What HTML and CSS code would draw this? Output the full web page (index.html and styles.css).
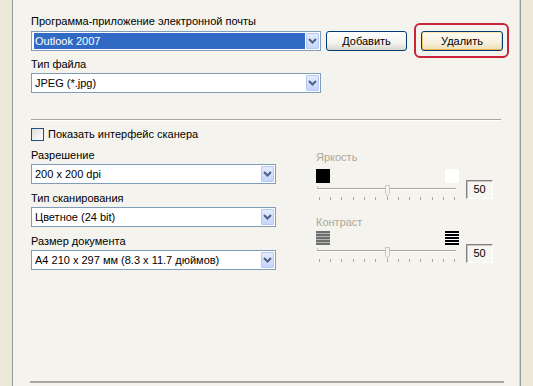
FILE: index.html
```html
<!DOCTYPE html>
<html lang="ru">
<head>
<meta charset="utf-8">
<title>Сканирование в e-mail</title>
<link rel="stylesheet" href="styles.css">
</head>
<body>
<div class="window">
  <div class="edge edge-left"></div>
  <div class="panel">
    <div class="label label-first">Программа-приложение электронной почты</div>
    <div class="mail-row">
      <div class="combo combo-wide">
        <span class="value selected">Outlook 2007</span>
        <span class="drop"><svg width="9" height="6" viewBox="0 0 9 6"><path d="M1 1 L4.5 4.5 L8 1" fill="none" stroke="#4d6185" stroke-width="2"/></svg></span>
      </div>
      <button class="btn btn-add">Добавить</button>
      <span class="btn-wrap">
        <button class="btn btn-default">Удалить</button>
        <span class="callout"></span>
      </span>
    </div>
    <div class="label label-gap">Тип файла</div>
    <div class="combo combo-wide">
      <span class="value">JPEG (*.jpg)</span>
      <span class="drop"><svg width="9" height="6" viewBox="0 0 9 6"><path d="M1 1 L4.5 4.5 L8 1" fill="none" stroke="#4d6185" stroke-width="2"/></svg></span>
    </div>

    <div class="etched"></div>

    <label class="check">
      <span class="check-box"></span>
      <span>Показать интерфейс сканера</span>
    </label>

    <div class="scan">
      <div class="scan-left">
        <div class="label">Разрешение</div>
        <div class="combo combo-mid">
          <span class="value">200 x 200 dpi</span>
          <span class="drop"><svg width="9" height="6" viewBox="0 0 9 6"><path d="M1 1 L4.5 4.5 L8 1" fill="none" stroke="#4d6185" stroke-width="2"/></svg></span>
        </div>
        <div class="label label-gap">Тип сканирования</div>
        <div class="combo combo-mid">
          <span class="value">Цветное (24 bit)</span>
          <span class="drop"><svg width="9" height="6" viewBox="0 0 9 6"><path d="M1 1 L4.5 4.5 L8 1" fill="none" stroke="#4d6185" stroke-width="2"/></svg></span>
        </div>
        <div class="label label-gap">Размер документа</div>
        <div class="combo combo-mid">
          <span class="value">A4 210 x 297 мм (8.3 x 11.7 дюймов)</span>
          <span class="drop"><svg width="9" height="6" viewBox="0 0 9 6"><path d="M1 1 L4.5 4.5 L8 1" fill="none" stroke="#4d6185" stroke-width="2"/></svg></span>
        </div>
      </div>

      <div class="scan-right">
        <div class="adjust adjust-bright">
          <div class="label disabled">Яркость</div>
          <div class="adjust-row">
            <div class="slider-col">
              <div class="icons">
                <span class="sw sw-black"></span>
                <span class="sw sw-white"></span>
              </div>
              <svg class="track" width="145" height="20" viewBox="0 0 145 20">
                <path d="M1.5 3 V7" stroke="#c9c7bd" stroke-width="1"/>
                <path d="M1 5.5 H140" stroke="#a9a79d" stroke-width="1"/>
                <path d="M1 6.5 H140" stroke="#ffffff" stroke-width="1"/>
                <path d="M69.5 2.5 H73.5 V10.5 L71.5 13.5 L69.5 10.5 Z" fill="#f4f3ee" stroke="#c9c7bd" stroke-width="1"/>
                <g stroke="#a9a79d" stroke-width="1">
                  <path d="M3.5 14 V17"/><path d="M14.5 14 V17"/><path d="M25.5 14 V17"/><path d="M37.5 14 V17"/>
                  <path d="M48.5 14 V17"/><path d="M59.5 14 V17"/><path d="M71.5 14 V17"/><path d="M82.5 14 V17"/>
                  <path d="M93.5 14 V17"/><path d="M104.5 14 V17"/><path d="M116.5 14 V17"/><path d="M127.5 14 V17"/>
                  <path d="M138.5 14 V17"/>
                </g>
              </svg>
            </div>
            <div class="num">50</div>
          </div>
        </div>

        <div class="adjust adjust-contrast">
          <div class="label disabled">Контраст</div>
          <div class="adjust-row">
            <div class="slider-col">
              <div class="icons">
                <span class="sw sw-stripes-gray"></span>
                <span class="sw sw-stripes-black"></span>
              </div>
              <svg class="track" width="145" height="20" viewBox="0 0 145 20">
                <path d="M1.5 3 V7" stroke="#c9c7bd" stroke-width="1"/>
                <path d="M1 5.5 H140" stroke="#a9a79d" stroke-width="1"/>
                <path d="M1 6.5 H140" stroke="#ffffff" stroke-width="1"/>
                <path d="M69.5 2.5 H73.5 V10.5 L71.5 13.5 L69.5 10.5 Z" fill="#f4f3ee" stroke="#c9c7bd" stroke-width="1"/>
                <g stroke="#a9a79d" stroke-width="1">
                  <path d="M3.5 14 V17"/><path d="M14.5 14 V17"/><path d="M25.5 14 V17"/><path d="M37.5 14 V17"/>
                  <path d="M48.5 14 V17"/><path d="M59.5 14 V17"/><path d="M71.5 14 V17"/><path d="M82.5 14 V17"/>
                  <path d="M93.5 14 V17"/><path d="M104.5 14 V17"/><path d="M116.5 14 V17"/><path d="M127.5 14 V17"/>
                  <path d="M138.5 14 V17"/>
                </g>
              </svg>
            </div>
            <div class="num">50</div>
          </div>
        </div>
      </div>
    </div>

    <div class="bottom-line"></div>
  </div>
  <div class="edge edge-right"></div>
</div>
</body>
</html>
```

FILE: styles.css
```css
* {
  box-sizing: border-box;
}

html, body {
  margin: 0;
  padding: 0;
  background: #ece9d8;
}

body {
  font-family: "Liberation Sans", Arial, sans-serif;
  font-size: 11px;
  color: #000;
}

.window {
  display: flex;
  width: 533px;
  height: 386px;
  overflow: hidden;
}

.edge {
  background: #ece9d8;
}

.edge-left {
  width: 12px;
  flex: none;
}

.edge-right {
  flex: 1;
}

.panel {
  width: 509px;
  flex: none;
  background: #f4f3ee;
  border-left: 1px solid #919b9c;
  border-right: 1px solid #919b9c;
  box-shadow: inset -1px 0 0 #d8d6cc;
  padding: 15px 0 3px 18px;
  display: flex;
  flex-direction: column;
}

.label {
  height: 13px;
  line-height: 13px;
  margin-bottom: 2px;
  white-space: nowrap;
}

.label-first {
  margin-bottom: 3px;
}

.label-gap {
  margin-top: 7px;
}

.scan-left .label-gap {
  margin-top: 8px;
}

.disabled {
  color: #aca899;
}

.mail-row {
  display: flex;
  align-items: center;
}

.combo {
  height: 20px;
  border: 1px solid #7f9db9;
  background: #fff;
  display: flex;
  align-items: stretch;
  flex: none;
}

.combo-wide {
  width: 290px;
}

.combo-mid {
  width: 245px;
}

.value {
  flex: 1;
  margin: 1px 1px 1px 2px;
  padding-left: 1px;
  line-height: 16px;
  white-space: nowrap;
  overflow: hidden;
}

.selected {
  background: #316ac5;
  color: #fff;
}

.drop {
  width: 13px;
  margin: 1px 1px 1px 0;
  border: 1px solid #b7c9f1;
  border-radius: 1px;
  background: linear-gradient(#e3ebfd, #c5d5fc);
  display: flex;
  align-items: center;
  justify-content: center;
}

.btn {
  font: inherit;
  color: #000;
  height: 20px;
  padding: 0;
  border: 1px solid #003c74;
  border-radius: 3px;
  background: linear-gradient(#ffffff, #f3f2ec 60%, #d9d7cf);
  flex: none;
}

.btn-add {
  width: 81px;
  margin-left: 5px;
}

.btn-wrap {
  position: relative;
  margin-left: 14px;
  display: flex;
}

.btn-default {
  width: 82px;
  background: linear-gradient(#fffcf2, #f7f0dc 60%, #ecdcb4);
  box-shadow: inset 0 1px 0 #ffe6ae, inset 0 -1px 0 #f0b34a, inset 1px 0 0 #f6cc7a, inset -1px 0 0 #f6cc7a;
}

.callout {
  position: absolute;
  left: -7px;
  right: -6px;
  top: -8px;
  bottom: -7px;
  border: 2px solid #c8243a;
  border-radius: 6px;
  pointer-events: none;
}

.etched {
  width: 470px;
  height: 2px;
  margin-top: 26px;
  border-top: 1px solid #aca899;
  border-bottom: 1px solid #fff;
}

.check {
  display: flex;
  align-items: center;
  gap: 4px;
  height: 13px;
  line-height: 13px;
  margin-top: 7px;
}

.check-box {
  width: 13px;
  height: 13px;
  border: 1px solid #1c5180;
  background: linear-gradient(135deg, #dcdcd7, #ffffff);
}

.scan {
  display: flex;
  margin-top: 8px;
}

.scan-left {
  width: 245px;
}

.scan-right {
  margin-left: 40px;
  padding-top: 2px;
}

.adjust-row {
  display: flex;
  align-items: flex-start;
}

.adjust-bright .adjust-row {
  margin-top: 5px;
}

.adjust-contrast {
  margin-top: 13px;
}

.adjust-contrast .adjust-row {
  margin-top: 2px;
}

.slider-col {
  width: 145px;
}

.icons {
  display: flex;
  justify-content: space-between;
  width: 143px;
  height: 14px;
}

.sw {
  width: 14px;
  height: 14px;
}

.sw-black {
  background: #000;
}

.sw-white {
  background: #fff;
}

.sw-stripes-gray {
  background: repeating-linear-gradient(#6f6f6f 0 2px, #b4b4b4 2px 3px);
}

.sw-stripes-black {
  background: repeating-linear-gradient(#000 0 2px, #fff 2px 3px);
}

.track {
  display: block;
}

.num {
  width: 27px;
  height: 19px;
  margin-left: 5px;
  margin-top: 11px;
  border-top: 1px solid #808080;
  border-left: 1px solid #808080;
  border-right: 1px solid #fff;
  border-bottom: 1px solid #fff;
  box-shadow: inset 1px 1px 0 #c8c6bd;
  background: #f7f6f2;
  line-height: 17px;
  text-align: center;
  font-size: 11px;
}

.adjust-contrast .num {
  margin-top: 13px;
}

.bottom-line {
  margin-top: auto;
  width: 474px;
  margin-left: -1px;
  height: 2px;
  background: #a7a69f;
}
```
